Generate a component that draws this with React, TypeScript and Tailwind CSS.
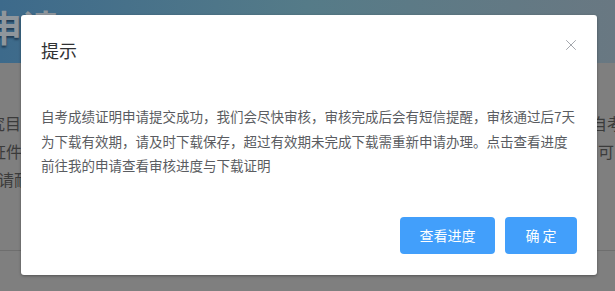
import { X } from 'lucide-react';

const cjk = '"Noto Sans CJK SC", "Microsoft YaHei", sans-serif';

function BackgroundPage() {
  return (
    <div className="absolute inset-0 bg-[#7f7f7f]">
      <div className="h-[63px] bg-gradient-to-r from-[#3d6a8b] via-[#557b88] to-[#697882] overflow-hidden">
        <div className="-ml-[14px] pt-[2px] text-[36px] leading-[48px] font-bold text-[#8f969c] [text-shadow:0_2px_2px_rgba(20,40,60,0.7)]">
          申请
        </div>
      </div>
      <div className="pt-[46px] flex flex-col text-[16px] leading-[28px] text-[#3b3b3b]">
        <div className="flex justify-between">
          <span className="-ml-[27px]">研究目</span>
          <span className="-mr-[8px]">自考</span>
        </div>
        <div className="flex justify-between">
          <span className="-ml-[10px]">证件</span>
          <span className="mr-[1px]">可</span>
        </div>
        <div className="flex justify-between">
          <span className="-ml-[2px]">请耐</span>
          <span></span>
        </div>
      </div>
      <div className="absolute left-0 right-0 top-[250px] border-t border-[#6e6e6e]" />
    </div>
  );
}

export default function App() {
  return (
    <div className="relative w-[615px] h-[291px] overflow-hidden" style={{ fontFamily: cjk }}>
      <BackgroundPage />

      <div className="absolute left-[21px] top-[15px] w-[576px] h-[260px] bg-white rounded-[3px] shadow-[0_1px_3px_rgba(0,0,0,0.35)] flex flex-col px-5 pb-[21px]">
        <div className="flex items-start justify-between pt-[20px]">
          <span className="text-[18px] leading-[30px] text-[#303133]">提示</span>
          <button className="mt-[1px] -mr-[3px] text-[#9a9da4]">
            <X className="w-[18px] h-[18px]" strokeWidth={1.2} />
          </button>
        </div>

        <p className="mt-[39px] text-[13.5px] leading-[24.5px] text-[#5a5c61] whitespace-nowrap">
          自考成绩证明申请提交成功，我们会尽快审核，审核完成后会有短信提醒，审核通过后7天
          <br />
          为下载有效期，请及时下载保存，超过有效期未完成下载需重新申请办理。点击查看进度
          <br />
          前往我的申请查看审核进度与下载证明
        </p>

        <div className="mt-auto flex justify-end gap-[10px]">
          <button className="h-[37px] w-[95px] rounded-[4px] bg-[#429ffb] text-white text-[14px]">
            查看进度
          </button>
          <button className="h-[37px] w-[72px] rounded-[4px] bg-[#429ffb] text-white text-[14px]">
            确 定
          </button>
        </div>
      </div>
    </div>
  );
}
